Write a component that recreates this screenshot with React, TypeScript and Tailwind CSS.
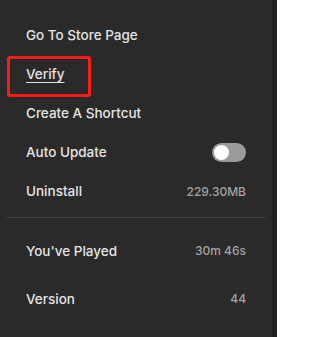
import React, { useState } from 'react';

const font = { fontFamily: 'Inter, "Noto Sans", sans-serif' };

const Row: React.FC<{ label: string; value?: string; tall?: boolean; underline?: boolean; children?: React.ReactNode }> = ({
    label,
    value,
    tall,
    underline,
    children,
}) => (
    <div className={`flex items-center justify-between px-[26px] ${tall ? 'h-[48px]' : 'h-[39px]'}`}>
        <span
            className={`text-[13.5px] font-medium text-[#e4e4e4] ${underline ? 'underline underline-offset-[3px] decoration-1' : ''}`}
        >
            {label}
        </span>
        {value && <span className="text-[12px] font-medium text-[#a3a3a3]">{value}</span>}
        {children}
    </div>
);

export default function App() {
    const [autoUpdate, setAutoUpdate] = useState(false);

    return (
        <div className="flex w-[277px] h-[337px] bg-[#202020]" style={font}>
            <div className="relative flex-1 bg-[#2a2a2a] pt-[16px]">
                <Row label="Go To Store Page" />
                <Row label="Verify" underline />
                <Row label="Create A Shortcut" />
                <Row label="Auto Update">
                    <button
                        onClick={() => setAutoUpdate(!autoUpdate)}
                        className={`flex items-center w-[34px] h-[19px] rounded-full px-[1.5px] ${
                            autoUpdate ? 'bg-[#0078f2] justify-end' : 'bg-[#9b9b9b] justify-start'
                        }`}
                    >
                        <span className="w-[15px] h-[15px] rounded-full bg-white" />
                    </button>
                </Row>
                <Row label="Uninstall" value="229.30MB" />
                <div className="mx-[6px] mt-[6px] h-px bg-[#3d3d3d]" />
                <div className="mt-[9px]">
                    <Row label="You've Played" value="30m 46s" tall />
                    <Row label="Version" value="44" tall />
                </div>

                {/* highlight box */}
                <div className="absolute left-[7px] top-[56px] w-[84px] h-[41px] border-[3px] border-[#ff1a1a] rounded-[3px]" />
            </div>
            <div className="w-[5px]" />
        </div>
    );
}
